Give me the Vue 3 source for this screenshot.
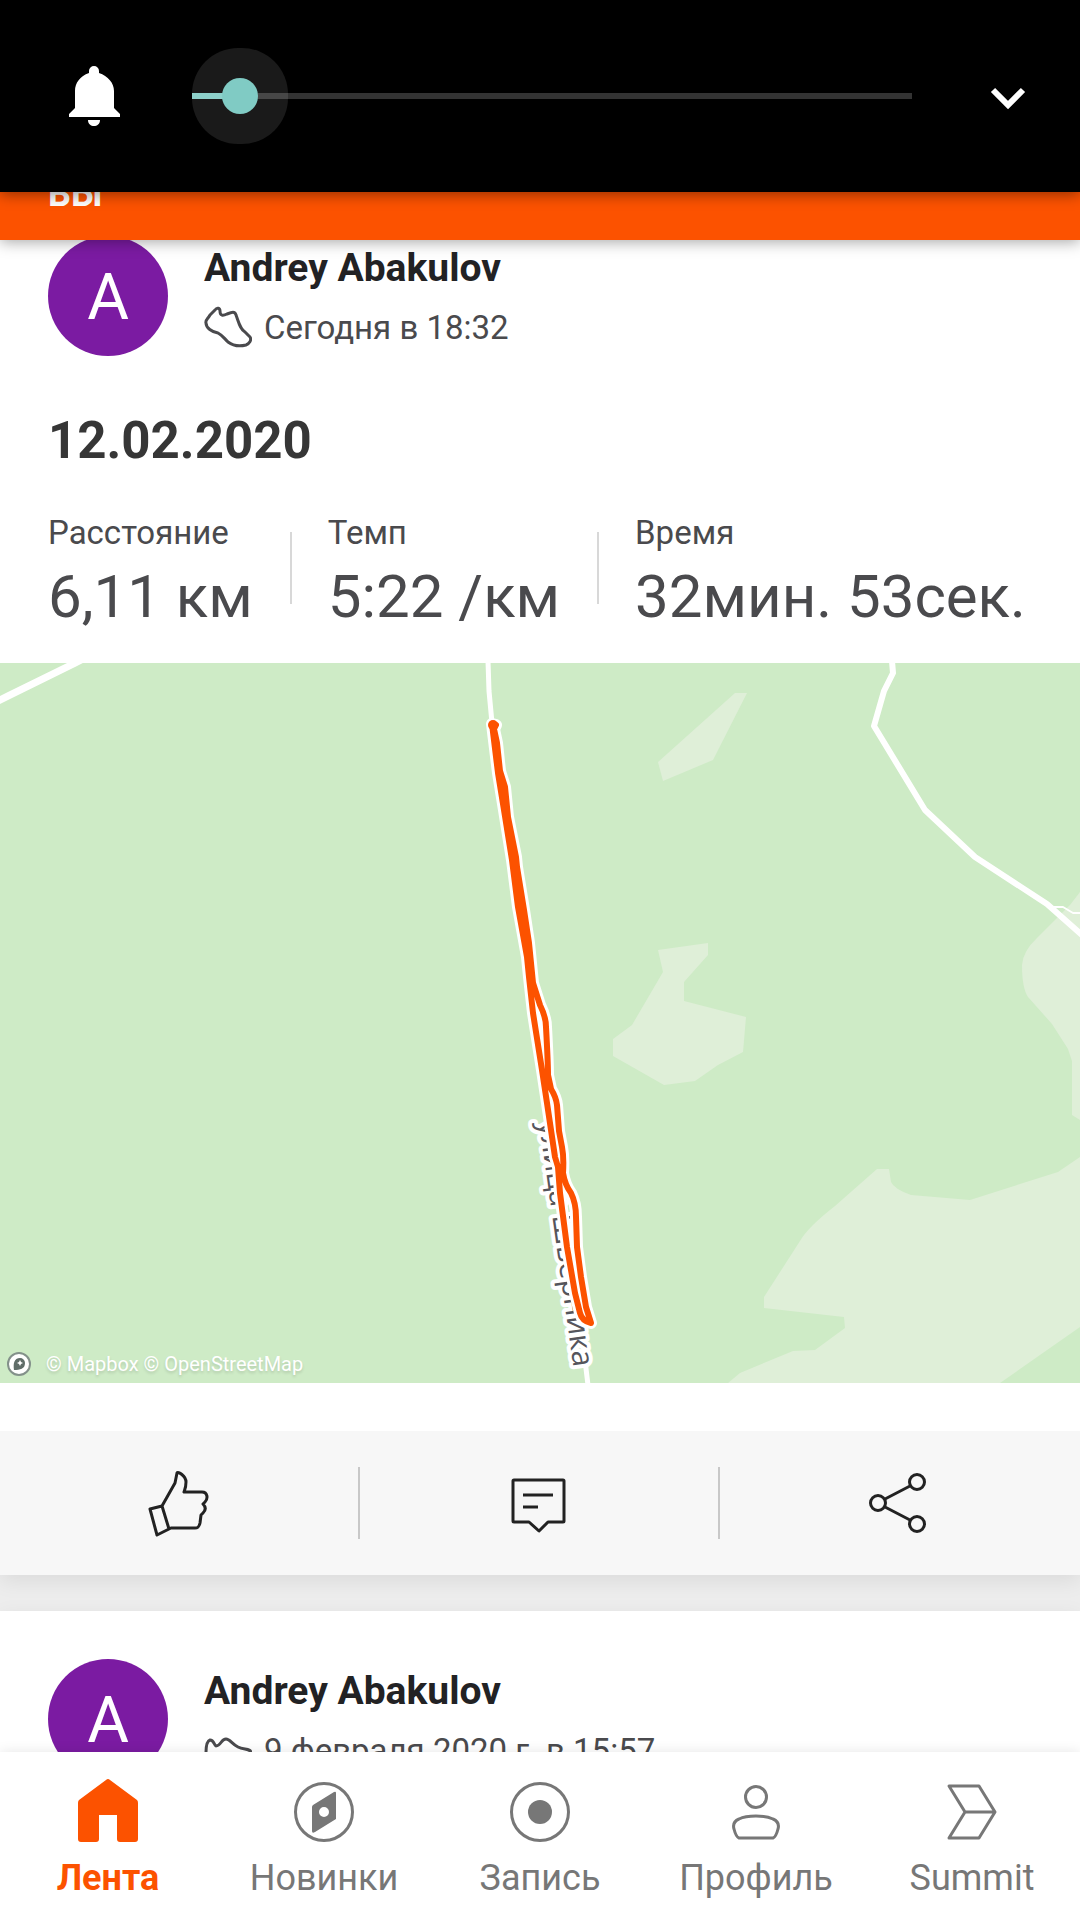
<script setup>
import { computed, ref } from 'vue'

const volume = ref(1)
const maxVolume = 23
const volumeShare = computed(() => volume.value / maxVolume)

const stats = [
  { label: 'Расстояние', value: '6,11 км' },
  { label: 'Темп', value: '5:22 /км' },
  { label: 'Время', value: '32мин. 53сек.' },
]

const tabs = [
  { id: 'feed', label: 'Лента', active: true },
  { id: 'explore', label: 'Новинки' },
  { id: 'record', label: 'Запись' },
  { id: 'profile', label: 'Профиль' },
  { id: 'summit', label: 'Summit' },
]

const route =
  'M492 61L498 110L504 147L512 197L518 244L527 294L529 314L533 350L542 407L547 440L555 494L558 504L560 530L567 584L575 630L580 650Q582 658 591 660L586 644L581 614L577 584L576 554Q576 540 571 530Q565 522 563 510Q564 494 562 484L559 468L557 442Q556 434 551 426L548 412Q548 400 546 364Q546 354 540 342L533 320L529 280L524 247L517 204L516 194L508 154L505 124L500 108L497 80L494 66L496 62Z'
</script>

<template>
  <div class="screen">
    <section class="volume" aria-label="Громкость">
      <svg class="bell" viewBox="0 0 72 72" aria-hidden="true">
        <path
          d="M36 6a5 5 0 0 0-5 5v2c-9 3-14 10-14 18v17l-6 6v3h51v-3l-6-6V31c0-8-6-15-15-18v-2a5 5 0 0 0-5-5zM30 60c0 4 3 6 6 6s6-2 6-6z"
          fill="#fff"
        />
      </svg>
      <input
        v-model.number="volume"
        class="slider"
        type="range"
        min="0"
        :max="maxVolume"
        aria-label="Громкость звонка"
        :style="{ '--share': volumeShare }"
      />
      <button class="expand" type="button" aria-label="Развернуть">
        <svg viewBox="0 0 72 72" aria-hidden="true">
          <path d="M21 30l15 15 15-15" fill="none" stroke="#fff" stroke-width="6" />
        </svg>
      </button>
    </section>

    <header class="tab-strip"><span>ВЫ</span></header>

    <main class="feed">
      <article class="card">
        <div class="athlete">
          <div class="avatar">A</div>
          <div class="who">
            <h2>Andrey Abakulov</h2>
            <p class="when">
              <svg viewBox="0 0 48 48" aria-hidden="true">
                <path
                  d="M2 19C1 16 4 15 6 11L11 6C13 3 16 4 16 7C16 12 19 12 23 10C28 8 31 7 32 11C35 19 36 25 41 28L46 33C48 36 45 40 42 41C34 43 28 41 24 38C19 33 18 31 14 29C8 28 2 24 2 19Z"
                />
              </svg>
              <span>Сегодня в 18:32</span>
            </p>
          </div>
        </div>

        <h1>12.02.2020</h1>

        <dl class="stats">
          <div v-for="stat in stats" :key="stat.label" class="stat">
            <dt>{{ stat.label }}</dt>
            <dd>{{ stat.value }}</dd>
          </div>
        </dl>

        <figure class="map">
          <svg viewBox="0 0 1080 720" role="img" aria-label="Карта маршрута">
            <rect width="1080" height="720" fill="#ceebc6" />
            <g fill="#dfefd8">
              <path d="M735 30L747 30L713 97L663 118L658 99Z" />
              <path
                d="M658 287L708 280V292L684 319V338L746 354L743 389L718 402L695 418L664 422L613 393V376L632 362L663 309Z"
              />
              <path d="M1080 229L1070 242L1037 275Q1023 288 1022 302Q1022 325 1028 334L1052 361L1068 386L1072 398V452L1080 457Z" />
              <path
                d="M1080 494L1058 509L970 537L911 532Q894 526 891 519L889 506H877L835 543Q808 564 800 578L764 634V645L844 654L845 665L815 687L793 688L740 710L728 720H1000L1080 664Z"
              />
            </g>
            <g fill="none" stroke="#fff" stroke-linejoin="round">
              <path d="M-6 40L8 33L75 0L83 -4" stroke-width="7" />
              <path d="M488 -2L489 28L492 60L529 314L560 530L580 656L588 722" stroke-width="5" />
              <path d="M892 -2L893 10L884 28L874 63L925 147L975 194L1047 241L1082 272" stroke-width="6" />
              <path d="M1050 244H1063L1073 250H1082" stroke-width="2" />
            </g>
            <text class="street" transform="translate(539 459) rotate(82)">улица Шверника</text>
            <path :d="route" fill="none" stroke="#fff" stroke-width="12" stroke-linejoin="round" />
            <path :d="route" fill="none" stroke="#fc5200" stroke-width="6" stroke-linejoin="round" />
            <circle cx="493" cy="62" r="5" fill="#fc5200" />
          </svg>
          <figcaption class="credits">
            <svg viewBox="0 0 24 24" aria-hidden="true">
              <circle cx="12" cy="12" r="11" fill="#fff" stroke="#83918a" stroke-width="2" />
              <path d="M7 18c-1-6 0-12 6-12a5 5 0 0 1 5 5c0 6-5 7-11 7z" fill="#5f6d68" />
              <path d="M13 8l1 2 2 1-2 1-1 2-1-2-2-1 2-1z" fill="#fff" />
            </svg>
            <span><a href="#mapbox">© Mapbox</a> <a href="#osm">© OpenStreetMap</a></span>
          </figcaption>
        </figure>

        <div class="actions">
          <button type="button" aria-label="Нравится">
            <svg viewBox="0 0 72 72" aria-hidden="true">
              <path
                d="M7 42L19 39L26 62L14 68ZM19 39L32 16L34 6C35 4 43 9 43 15C43 20 42 22 41 25H59C65 25 65 32 62 35L60 37C63 40 63 43 60 46L58 48L57 56C56 60 55 61 52 61H28L26 62"
              />
            </svg>
          </button>
          <button type="button" aria-label="Комментарии">
            <svg viewBox="0 0 72 72" aria-hidden="true">
              <path d="M11 13H60Q61 13 61 14V54Q61 55 60 55H45L36 64L26 55H11Q10 55 10 54V14Q10 13 11 13ZM20 28H50M20 40H35" />
            </svg>
          </button>
          <button type="button" aria-label="Поделиться">
            <svg viewBox="0 0 72 72" aria-hidden="true">
              <circle cx="15" cy="36" r="7.5" />
              <circle cx="54" cy="15" r="7.5" />
              <circle cx="54" cy="57" r="7.5" />
              <path d="M22 32L47 19M22 40L47 53" />
            </svg>
          </button>
        </div>
      </article>

      <article class="card">
        <div class="athlete">
          <div class="avatar">A</div>
          <div class="who">
            <h2>Andrey Abakulov</h2>
            <p class="when">
              <svg viewBox="0 0 48 48" aria-hidden="true">
                <path
                  d="M2 26C2 20 3 14 6 13C10 13 10 18 12 19C17 19 17 12 22 12C26 12 28 17 34 20C40 23 47 21 47 26V33C34 36 14 36 3 33Z"
                />
              </svg>
              <span>9 февраля 2020 г. в 15:57</span>
            </p>
          </div>
        </div>
      </article>
    </main>

    <nav class="tabs">
      <a v-for="tab in tabs" :key="tab.id" :href="'#' + tab.id" :class="{ active: tab.active }">
        <svg viewBox="0 0 72 72" aria-hidden="true">
          <path
            v-if="tab.id === 'feed'"
            d="M34 4Q36 2 38 4L65 24Q66 25 66 27V63Q66 66 63 66H48Q45 66 45 63V39H27V63Q27 66 24 66H9Q6 66 6 63V27Q6 25 7 24Z"
            fill="currentColor"
            stroke="none"
          />
          <template v-else-if="tab.id === 'explore'">
            <circle cx="36" cy="36" r="28.5" />
            <path
              d="M25 29L46 16Q48 15 48 17V43L27 56Q24 58 24 55V31Q24 30 25 29ZM36 31a5 5 0 1 0 0 10a5 5 0 1 0 0-10Z"
              fill="currentColor"
              fill-rule="evenodd"
              stroke="none"
            />
          </template>
          <template v-else-if="tab.id === 'record'">
            <circle cx="36" cy="36" r="28.5" />
            <circle cx="36" cy="36" r="12" fill="currentColor" stroke="none" />
          </template>
          <template v-else-if="tab.id === 'profile'">
            <circle cx="36" cy="21" r="10.5" />
            <path d="M19 62Q16 61 14 53Q12 46 19 43C27 39 45 39 53 43Q60 46 58 53Q56 61 53 62Z" />
          </template>
          <path v-else d="M13 10H43L59 36L43 62H13L29 36ZM29 36H59" />
        </svg>
        <span>{{ tab.label }}</span>
      </a>
    </nav>
  </div>
</template>

<style>
body {
  margin: 0;
  background: #fff;
}
</style>

<style scoped>
.screen {
  display: flex;
  flex-direction: column;
  height: 100vh;
  overflow: hidden;
  background: #fff;
  color: #4a4a4d;
  font-family: Roboto, 'Noto Sans', sans-serif;
}

h1,
h2,
p,
dl,
dd,
figure {
  margin: 0;
}

button {
  padding: 0;
  border: 0;
  background: none;
}

svg {
  display: block;
}

.volume {
  position: relative;
  z-index: 3;
  display: flex;
  flex: none;
  align-items: center;
  height: 192px;
  padding: 0 36px 0 58px;
  background: #000;
  box-shadow: 0 2px 14px rgba(0, 0, 0, 0.45);
}

.bell {
  flex: none;
  width: 72px;
  height: 72px;
}

.slider {
  flex: 1;
  min-width: 0;
  height: 96px;
  margin: 0 60px 0 62px;
  appearance: none;
  background: linear-gradient(
      to right,
      #80cbc4 calc(18px + (100% - 36px) * var(--share)),
      #333 0
    )
    center / 100% 6px no-repeat;
}

.slider::-webkit-slider-thumb {
  width: 36px;
  height: 36px;
  appearance: none;
  border-radius: 50%;
  background: #80cbc4;
  box-shadow: 0 0 0 30px rgba(255, 255, 255, 0.1);
}

.expand,
.expand svg {
  width: 72px;
  height: 72px;
}

.tab-strip {
  position: relative;
  z-index: 2;
  flex: none;
  height: 48px;
  background: #fc5200;
  color: #fff;
  font-size: 36px;
  font-weight: 700;
  line-height: 40px;
  box-shadow: 0 2px 14px rgba(0, 0, 0, 0.35);
}

.tab-strip span {
  display: block;
  margin-top: -18px;
  padding-left: 48px;
}

.feed {
  display: flex;
  flex: 1;
  flex-direction: column;
  gap: 36px;
  min-height: 0;
  margin-top: -52px;
  overflow: hidden;
  background: #ededed;
}

.card {
  flex: none;
  background: #fff;
  box-shadow: 0 6px 20px rgba(0, 0, 0, 0.08);
}

.card:last-child {
  flex: 1 0 auto;
}

.athlete {
  display: flex;
  gap: 36px;
  padding: 48px 48px 0;
}

.avatar {
  flex: none;
  width: 120px;
  height: 120px;
  border-radius: 50%;
  background: #7b1ba2;
  color: #fff;
  font-size: 64px;
  line-height: 124px;
  text-align: center;
}

.who {
  padding-top: 8px;
}

h2 {
  color: #222224;
  font-size: 39px;
  font-weight: 700;
  line-height: 48px;
}

.when {
  display: flex;
  align-items: center;
  gap: 12px;
  margin-top: 12px;
  font-size: 33px;
  line-height: 48px;
}

.when svg {
  flex: none;
  width: 48px;
  height: 48px;
  fill: none;
  stroke: #4a4a4d;
  stroke-width: 3;
  stroke-linejoin: round;
}

h1 {
  padding: 53px 48px 0;
  color: #363636;
  font-size: 51px;
  font-weight: 700;
  line-height: 64px;
}

.stats {
  display: flex;
  padding: 40px 48px 30px;
}

.stat + .stat {
  margin-left: 37px;
  padding-left: 38px;
  background: linear-gradient(#d8d8d8, #d8d8d8) 0 19px / 2px 72px no-repeat;
}

dt {
  margin-bottom: 8px;
  font-size: 33px;
  line-height: 40px;
}

dd {
  font-size: 60px;
  line-height: 72px;
  white-space: nowrap;
}

.map {
  position: relative;
}

.map > svg {
  width: 100%;
}

.street {
  fill: #55555c;
  stroke: #fff;
  stroke-width: 8px;
  stroke-linejoin: round;
  paint-order: stroke;
  font-family: 'Open Sans', 'Noto Sans', sans-serif;
  font-size: 30px;
  font-weight: 500;
}

.credits {
  position: absolute;
  bottom: 7px;
  left: 7px;
  display: flex;
  align-items: center;
  gap: 15px;
  color: #fff;
  font-size: 20px;
  line-height: 24px;
  text-shadow: 0 2px 3px rgba(0, 0, 0, 0.15);
}

.credits svg {
  width: 24px;
  height: 24px;
}

.credits a {
  color: inherit;
  text-decoration: none;
}

.actions {
  display: flex;
  margin-top: 48px;
  background: #f7f7f7;
}

.actions button {
  display: flex;
  flex: 1;
  justify-content: center;
  padding: 36px 2px 36px 0;
}

.actions button:not(:last-child) {
  background: linear-gradient(#c8c8c8, #c8c8c8) 100% 50% / 2px 72px no-repeat;
}

.actions svg {
  width: 72px;
  height: 72px;
  fill: none;
  stroke: #222;
  stroke-width: 3;
  stroke-linejoin: round;
}

.tabs {
  position: relative;
  z-index: 2;
  display: flex;
  flex: none;
  height: 168px;
  background: #fff;
  box-shadow: 0 0 12px rgba(0, 0, 0, 0.1);
}

.tabs a {
  display: flex;
  flex: 1;
  flex-direction: column;
  align-items: center;
  padding-top: 24px;
  color: #777;
  font-size: 36px;
  line-height: 44px;
  text-decoration: none;
}

.tabs span {
  margin-top: 8px;
}

.tabs .active {
  color: #fc5200;
  font-weight: 700;
}

.tabs svg {
  width: 72px;
  height: 72px;
  fill: none;
  stroke: currentColor;
  stroke-width: 3;
  stroke-linejoin: round;
}
</style>
